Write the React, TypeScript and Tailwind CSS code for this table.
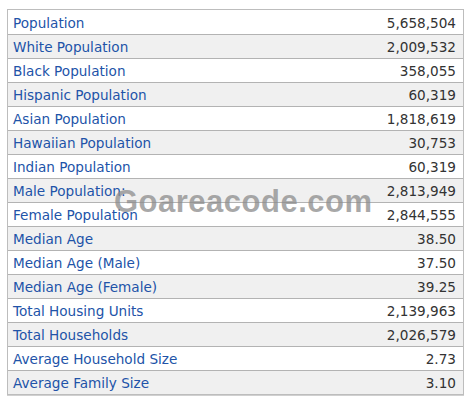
const rows: [string, string][] = [
  ["Population", "5,658,504"],
  ["White Population", "2,009,532"],
  ["Black Population", "358,055"],
  ["Hispanic Population", "60,319"],
  ["Asian Population", "1,818,619"],
  ["Hawaiian Population", "30,753"],
  ["Indian Population", "60,319"],
  ["Male Population:", "2,813,949"],
  ["Female Population", "2,844,555"],
  ["Median Age", "38.50"],
  ["Median Age (Male)", "37.50"],
  ["Median Age (Female)", "39.25"],
  ["Total Housing Units", "2,139,963"],
  ["Total Households", "2,026,579"],
  ["Average Household Size", "2.73"],
  ["Average Family Size", "3.10"],
];

export default function App() {
  return (
    <div className="h-[405px] w-[474px] bg-white pl-[7px] pt-[9px] font-['DejaVu_Sans',Verdana,sans-serif] text-[13.6px]">
      <div className="relative w-[457px] border border-[#bdbdbd] shadow-[0_1px_0_#d0d0d0]">
        {rows.map(([label, value], i) => (
          <div
            key={label}
            className={`flex h-6 items-center justify-between pl-[5px] pr-[7px] pt-[2px] ${
              i > 0 ? "border-t border-[#b3b3b3]" : ""
            } ${i % 2 === 1 ? "bg-[#f0f0f0]" : "bg-white"}`}
          >
            <span className="text-[#2153a8]">{label}</span>
            <span className="text-[#333333]">{value}</span>
          </div>
        ))}
        <div className="pointer-events-none absolute left-[106px] top-[176px] font-['Liberation_Sans',Arial,sans-serif] text-[31px] font-bold leading-none tracking-[0.5px] text-[#8c8c8c]/75">
          Goareacode.com
        </div>
      </div>
    </div>
  );
}
